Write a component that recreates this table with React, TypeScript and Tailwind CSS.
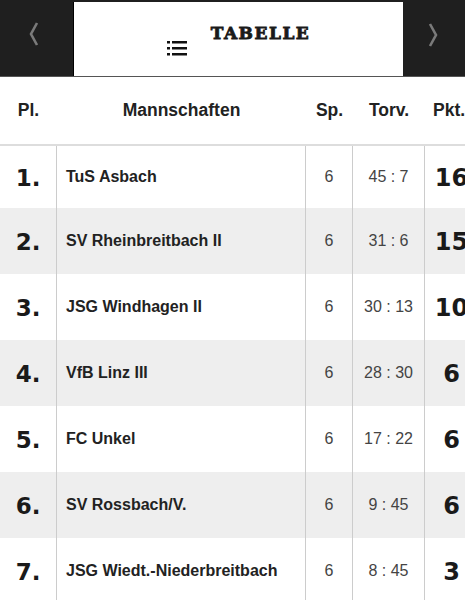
const rows = [
  { pl: "1.", team: "TuS Asbach", sp: "6", torv: "45 : 7", pkt: "16" },
  { pl: "2.", team: "SV Rheinbreitbach II", sp: "6", torv: "31 : 6", pkt: "15" },
  { pl: "3.", team: "JSG Windhagen II", sp: "6", torv: "30 : 13", pkt: "10" },
  { pl: "4.", team: "VfB Linz III", sp: "6", torv: "28 : 30", pkt: "6" },
  { pl: "5.", team: "FC Unkel", sp: "6", torv: "17 : 22", pkt: "6" },
  { pl: "6.", team: "SV Rossbach/V.", sp: "6", torv: "9 : 45", pkt: "6" },
  { pl: "7.", team: "JSG Wiedt.-Niederbreitbach", sp: "6", torv: "8 : 45", pkt: "3" },
];

const grid = "grid grid-cols-[57px_249px_47px_72px_53px] w-[478px]";

const ListIcon = () => (
  <svg width="20" height="17" viewBox="0 0 20 17" className="mt-[18px] shrink-0">
    <rect x="0" y="1" width="3" height="2.5" fill="#111" />
    <rect x="0" y="7" width="3" height="2.5" fill="#111" />
    <rect x="0" y="13" width="3" height="2.5" fill="#111" />
    <rect x="5" y="1" width="15" height="2.5" fill="#111" />
    <rect x="5" y="7" width="15" height="2.5" fill="#111" />
    <rect x="5" y="13" width="15" height="2.5" fill="#111" />
  </svg>
);

const Chevron = ({ dir }: { dir: "l" | "r" }) => (
  <svg width="10" height="24" viewBox="0 0 10 24">
    <polyline
      points={dir === "l" ? "8,1 2,12 8,23" : "2,1 8,12 2,23"}
      fill="none"
      stroke="#7a7a7a"
      strokeWidth="2.6"
    />
  </svg>
);

export default function App() {
  return (
    <div className="w-[465px] h-[600px] overflow-hidden bg-white font-['Liberation_Sans',Arial,sans-serif]">
      <div className="h-[77px] bg-[#1f1f1f] flex border-b border-[#555]">
        <div className="w-[73px] flex items-start justify-center pt-[22px] pr-[6px]">
          <Chevron dir="l" />
        </div>
        <div className="w-[330px] mt-[2px] bg-white border-l border-black flex justify-center gap-[24px] pt-[20px]">
          <ListIcon />
          <div className="font-['DejaVu_Serif',serif] font-bold text-[17px] leading-none tracking-[1.5px] text-[#1a1a1a] pt-[3px] [-webkit-text-stroke:0.8px_#1a1a1a]">
            TABELLE
          </div>
        </div>
        <div className="flex-1 flex items-start justify-center pt-[23px] pr-[2px]">
          <Chevron dir="r" />
        </div>
      </div>

      <div className={`${grid} h-[69px] items-center text-[17.5px] font-bold text-[#222] border-b-2 border-[#dddddd]`}>
        <div className="text-center">Pl.</div>
        <div className="text-center">Mannschaften</div>
        <div className="text-center">Sp.</div>
        <div className="text-center">Torv.</div>
        <div className="pl-[8px] whitespace-nowrap">Pkt.</div>
      </div>

      {rows.map((r, i) => (
        <div
          key={r.pl}
          className={`${grid} ${i === 0 ? "h-[62px]" : "h-[66px]"} ${i % 2 === 1 ? "bg-[#eeeeee]" : "bg-white"}`}
        >
          <div className="flex items-center justify-center border-r border-[#cccccc] font-['DejaVu_Sans',sans-serif] font-bold text-[23px] text-[#1a1a1a] pt-[2px]">
            {r.pl}
          </div>
          <div className="flex items-center pl-[9px] border-r border-[#cccccc] font-bold text-[16px] text-[#222]">
            {r.team}
          </div>
          <div className="flex items-center justify-center border-r border-[#cccccc] text-[16px] text-[#444]">
            {r.sp}
          </div>
          <div className="flex items-center justify-center border-r border-[#cccccc] text-[16px] text-[#444]">
            {r.torv}
          </div>
          <div className="flex items-center justify-center font-['DejaVu_Sans',sans-serif] font-bold text-[24px] text-[#1a1a1a] pt-[2px]">
            {r.pkt}
          </div>
        </div>
      ))}
    </div>
  );
}
